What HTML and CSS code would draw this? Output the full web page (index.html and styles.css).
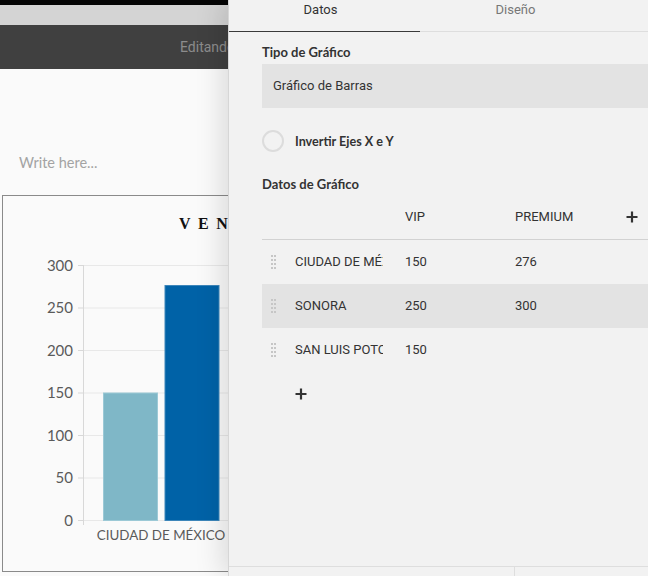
FILE: index.html
```html
<!DOCTYPE html>
<html lang="es">
<head>
<meta charset="utf-8">
<title>Editor de gráfico</title>
<link rel="stylesheet" href="styles.css">
</head>
<body>
<div class="app">
  <div class="topbar"></div>
  <div class="greybar"></div>
  <header class="editor-head"><span class="editing">Editando</span></header>
  <main class="canvas">
    <p class="write">Write here...</p>
    <div class="chart-box">
      <svg class="chart" width="642" height="375" viewBox="0 0 642 375">
        <text class="chart-title" x="176" y="33">VENTAS</text>
        <g class="grid">
          <line x1="80" y1="69.5" x2="642" y2="69.5"/>
          <line x1="80" y1="112" x2="642" y2="112"/>
          <line x1="80" y1="154.5" x2="642" y2="154.5"/>
          <line x1="80" y1="197" x2="642" y2="197"/>
          <line x1="80" y1="239.5" x2="642" y2="239.5"/>
          <line x1="80" y1="282" x2="642" y2="282"/>
          <line x1="80" y1="324.5" x2="642" y2="324.5"/>
        </g>
        <g class="ticks">
          <line x1="75" y1="69.5" x2="80" y2="69.5"/>
          <line x1="75" y1="112" x2="80" y2="112"/>
          <line x1="75" y1="154.5" x2="80" y2="154.5"/>
          <line x1="75" y1="197" x2="80" y2="197"/>
          <line x1="75" y1="239.5" x2="80" y2="239.5"/>
          <line x1="75" y1="282" x2="80" y2="282"/>
          <line x1="75" y1="324.5" x2="80" y2="324.5"/>
          <line x1="80.5" y1="69" x2="80.5" y2="329"/>
        </g>
        <g class="ylabels">
          <text x="70" y="74.5">300</text>
          <text x="70" y="117">250</text>
          <text x="70" y="159.5">200</text>
          <text x="70" y="202">150</text>
          <text x="70" y="244.5">100</text>
          <text x="70" y="287">50</text>
          <text x="70" y="329.5">0</text>
        </g>
        <rect class="bar-vip" x="100.5" y="197" width="54" height="127.5"/>
        <rect class="bar-premium" x="162" y="89.5" width="54" height="235"/>
        <text class="xlabel" x="158" y="344">CIUDAD DE MÉXICO</text>
      </svg>
    </div>
  </main>

  <aside class="panel">
    <nav class="tabs">
      <div class="tab active">Datos</div>
      <div class="tab">Diseño</div>
      <div class="tab-rest"></div>
    </nav>
    <div class="panel-body">
      <div class="label">Tipo de Gráfico</div>
      <div class="select">Gráfico de Barras</div>
      <div class="toggle"><span class="radio"></span><span>Invertir Ejes X e Y</span></div>
      <div class="label label-data">Datos de Gráfico</div>
      <div class="table">
        <div class="row head">
          <span></span><span></span><span>VIP</span><span>PREMIUM</span>
          <span class="plus-cell"><svg class="plus" width="12" height="12" viewBox="0 0 12 12"><path d="M6 0.5V11.5M0.5 6H11.5"/></svg></span>
        </div>
        <div class="row">
          <span class="handle-cell"><svg class="handle" width="5" height="14" viewBox="0 0 5 14"><rect x="0" y="0" width="2" height="2"/><rect x="3" y="0" width="2" height="2"/><rect x="0" y="4" width="2" height="2"/><rect x="3" y="4" width="2" height="2"/><rect x="0" y="8" width="2" height="2"/><rect x="3" y="8" width="2" height="2"/><rect x="0" y="12" width="2" height="2"/><rect x="3" y="12" width="2" height="2"/></svg></span>
          <span class="name"><span class="name-text">CIUDAD DE MÉXICO</span></span><span>150</span><span>276</span><span></span>
        </div>
        <div class="row selected">
          <span class="handle-cell"><svg class="handle" width="5" height="14" viewBox="0 0 5 14"><rect x="0" y="0" width="2" height="2"/><rect x="3" y="0" width="2" height="2"/><rect x="0" y="4" width="2" height="2"/><rect x="3" y="4" width="2" height="2"/><rect x="0" y="8" width="2" height="2"/><rect x="3" y="8" width="2" height="2"/><rect x="0" y="12" width="2" height="2"/><rect x="3" y="12" width="2" height="2"/></svg></span>
          <span class="name"><span class="name-text">SONORA</span></span><span>250</span><span>300</span><span></span>
        </div>
        <div class="row">
          <span class="handle-cell"><svg class="handle" width="5" height="14" viewBox="0 0 5 14"><rect x="0" y="0" width="2" height="2"/><rect x="3" y="0" width="2" height="2"/><rect x="0" y="4" width="2" height="2"/><rect x="3" y="4" width="2" height="2"/><rect x="0" y="8" width="2" height="2"/><rect x="3" y="8" width="2" height="2"/><rect x="0" y="12" width="2" height="2"/><rect x="3" y="12" width="2" height="2"/></svg></span>
          <span class="name"><span class="name-text">SAN LUIS POTOSÍ</span></span><span>150</span><span></span><span></span>
        </div>
        <div class="add-row"><svg class="plus" width="12" height="12" viewBox="0 0 12 12"><path d="M6 0.5V11.5M0.5 6H11.5"/></svg></div>
      </div>
    </div>
    <footer class="panel-foot"><div class="foot-btn"></div><div class="foot-btn last"></div></footer>
  </aside>
</div>
</body>
</html>
```

FILE: styles.css
```css
* { box-sizing: border-box; }
html, body { margin: 0; padding: 0; }
body { width: 648px; height: 576px; overflow: hidden; background: #fafafa; font-family: Roboto, "Liberation Sans", sans-serif; }

.app { position: relative; width: 648px; height: 576px; overflow: hidden; }

.topbar { height: 5px; background: #050505; }
.greybar { height: 20px; background: #d4d4d4; }
.editor-head { height: 44px; background: #404040; display: flex; align-items: center; padding-left: 180px; }
.editing { color: #8c8c8c; font-size: 14px; white-space: nowrap; }

.canvas { background: #fafafa; padding-top: 84px; }
.write { margin: 0 0 22px 19px; font-family: Lato, "Open Sans", sans-serif; font-size: 14.5px; line-height: 20px; color: #a3a3a3; }
.chart-box { margin-left: 2px; width: 644px; height: 377px; border: 1px solid #8a8a8a; background: #fafafa; }
.chart { display: block; }
.chart-title { font-family: "Liberation Serif", serif; font-weight: bold; font-size: 16px; letter-spacing: 7.5px; fill: #111; }
.grid line { stroke: #e8e8e8; stroke-width: 1; }
.ticks line { stroke: #d8d8d8; stroke-width: 1; }
.ylabels text { font-family: Lato, sans-serif; font-size: 15px; fill: #5a5a5a; text-anchor: end; }
.bar-vip { fill: #7fb7c7; stroke: #9cc9d6; stroke-width: 1; }
.bar-premium { fill: #0062a7; stroke: #3d86ba; stroke-width: 1; }
.xlabel { font-family: Lato, sans-serif; font-size: 13.4px; fill: #5a5a5a; text-anchor: middle; }

.panel { position: absolute; top: 0; left: 228px; right: 0; bottom: 0; background: #f2f2f2; border-left: 1px solid #d6d6d6; box-shadow: -6px 0 26px rgba(0,0,0,0.13); display: flex; flex-direction: column; color: #333; }

.tabs { display: flex; }
.tab { width: 191px; text-align: center; font-size: 13px; line-height: 16px; padding: 2px 0 13px; color: #777; border-bottom: 1px solid #dedede; }
.tab.active { color: #333; border-bottom-color: #3a3a3a; padding-right: 8px; }
.tab-rest { flex: 1; border-bottom: 1px solid #dedede; }

.panel-body { padding-left: 33px; flex: 1; }
.label { margin-top: 12px; font-family: Lato, sans-serif; font-weight: bold; font-size: 13px; line-height: 16px; color: #333; }
.label-data { margin-top: 24px; }
.select { margin-top: 4px; height: 44px; background: #e3e3e3; display: flex; align-items: center; padding-left: 11px; padding-bottom: 1px; font-size: 13px; color: #333; }
.toggle { margin-top: 22px; height: 22px; display: flex; align-items: center; gap: 11px; font-family: Lato, sans-serif; font-weight: bold; font-size: 12.6px; color: #333; }
.radio { width: 22px; height: 22px; border: 2px solid #dcdcdc; border-radius: 50%; }

.table { margin-top: 3px; }
.row { display: grid; grid-template-columns: 33px 110px 110px 1fr 22px; height: 44px; align-items: center; font-size: 13px; line-height: 15px; color: #333; padding-bottom: 1px; }
.row.head { height: 45px; border-bottom: 1px solid #d2d2d2; }
.row.selected { background: #e3e3e3; }
.name { display: block; width: 88px; overflow: hidden; white-space: nowrap; }
.name-text { white-space: nowrap; }
.handle-cell { padding-left: 9px; display: flex; align-items: center; }
.handle rect { fill: #c6c6c6; }
.plus-cell { display: flex; align-items: center; }
.plus path { stroke: #333; stroke-width: 2.2; fill: none; }
.add-row { height: 44px; display: flex; align-items: center; padding-left: 33px; }

.panel-foot { height: 10px; border-top: 1px solid #dedede; display: flex; }
.foot-btn { width: 286px; border-right: 1px solid #dedede; }
.foot-btn.last { flex: 1; border-right: none; }
```
